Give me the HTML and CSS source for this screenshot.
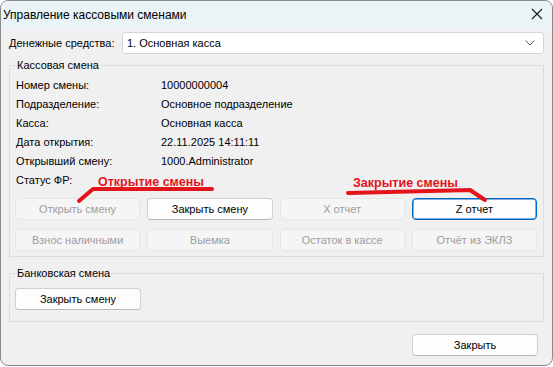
FILE: index.html
```html
<!DOCTYPE html>
<html lang="ru">
<head>
<meta charset="utf-8">
<title>Управление кассовыми сменами</title>
<link rel="stylesheet" href="styles.css">
</head>
<body>
<div class="window">
  <div class="titlebar">
    <span class="title">Управление кассовыми сменами</span>
    <svg class="close" width="12" height="12" viewBox="0 0 12 12"><path d="M1 1 L11 11 M11 1 L1 11" stroke="#1a1a1a" stroke-width="1.1" fill="none"/></svg>
  </div>
  <div class="content">
    <div class="field">
      <span class="field-label">Денежные средства:</span>
      <div class="combo">
        <span>1. Основная касса</span>
        <svg width="10" height="6" viewBox="0 0 10 6"><path d="M0.5 0.5 L5 5 L9.5 0.5" stroke="#606060" stroke-width="1" fill="none"/></svg>
      </div>
    </div>

    <fieldset class="group group-shift">
      <legend>Кассовая смена</legend>
      <div class="info">
        <span>Номер смены:</span><span>10000000004</span>
        <span>Подразделение:</span><span>Основное подразделение</span>
        <span>Касса:</span><span>Основная касса</span>
        <span>Дата открытия:</span><span>22.11.2025 14:11:11</span>
        <span>Открывший смену:</span><span>1000.Administrator</span>
        <span>Статус ФР:</span><span></span>
      </div>
      <div class="buttons">
        <button class="btn disabled">Открыть смену</button>
        <button class="btn">Закрыть смену</button>
        <button class="btn disabled">X отчет</button>
        <button class="btn focus">Z отчет</button>
        <button class="btn disabled">Взнос наличными</button>
        <button class="btn disabled">Выемка</button>
        <button class="btn disabled">Остаток в кассе</button>
        <button class="btn disabled">Отчёт из ЭКЛЗ</button>
      </div>
    </fieldset>

    <fieldset class="group group-bank">
      <legend>Банковская смена</legend>
      <button class="btn">Закрыть смену</button>
    </fieldset>

    <div class="footer">
      <button class="btn">Закрыть</button>
    </div>
  </div>

  <div class="annotations">
    <svg class="marks" width="553" height="367" viewBox="0 0 553 367">
      <path d="M79 201 L93 189 L212 189" stroke="#e3141c" stroke-width="4" fill="none" stroke-linecap="round" stroke-linejoin="round"/>
      <path d="M348 193 L470 190 L485 200" stroke="#e3141c" stroke-width="4" fill="none" stroke-linecap="round" stroke-linejoin="round"/>
    </svg>
    <span class="note note-open">Открытие смены</span>
    <span class="note note-close">Закрытие смены</span>
  </div>
</div>
</body>
</html>
```

FILE: styles.css
```css
html, body {
  margin: 0;
  padding: 0;
  background: #ffffff;
}

body {
  font-family: "Liberation Sans", Arial, sans-serif;
  font-size: 11px;
  color: #000;
}

.window {
  position: relative;
  box-sizing: border-box;
  width: 553px;
  height: 366px;
  border: 1px solid #8a8a8a;
  border-radius: 8px;
  background: #f0f0f0;
  overflow: hidden;
  display: flex;
  flex-direction: column;
}

.titlebar {
  height: 28px;
  background: #eaf3f5;
  display: flex;
  align-items: center;
  justify-content: space-between;
  padding: 0 9px 0 2px;
  flex-shrink: 0;
}

.title {
  font-size: 12px;
  line-height: 16px;
}

.close {
  display: block;
  margin-top: -2px;
}

.content {
  padding: 3px 8px 0 8px;
  display: flex;
  flex-direction: column;
}

.field {
  display: flex;
  align-items: center;
  height: 22px;
}

.field-label {
  width: 113px;
  flex-shrink: 0;
  white-space: nowrap;
}

.combo {
  flex: 1;
  height: 22px;
  box-sizing: border-box;
  background: #fff;
  border: 1px solid #d5d5d5;
  border-radius: 3px;
  display: flex;
  align-items: center;
  justify-content: space-between;
  padding: 0 8px 0 4px;
}

.combo svg {
  display: block;
}

.group {
  margin: 0;
  border: 1px solid #dcdcdc;
  border-radius: 0;
  min-width: 0;
}

.group legend {
  padding: 0 1px;
  margin-left: 1px;
  line-height: 16px;
  height: 16px;
}

.group-shift {
  margin-top: 3px;
  padding: 2px 6px 5px 5px;
}

.group-bank {
  margin-top: 8px;
  padding: 7px 6px 11px 5px;
}

.info {
  display: grid;
  grid-template-columns: 145px 1fr;
  grid-auto-rows: 19px;
  align-items: center;
  padding-left: 1px;
}

.buttons {
  margin-top: 9px;
  display: grid;
  grid-template-columns: repeat(4, 1fr);
  column-gap: 7px;
  row-gap: 9px;
}

.btn {
  font-family: inherit;
  font-size: 11px;
  height: 22px;
  box-sizing: border-box;
  padding: 0;
  margin: 0;
  background: #fdfdfd;
  color: #000;
  border: 1px solid #d0d0d0;
  border-bottom-color: #b8b8b8;
  border-radius: 4px;
}

.group-bank .btn {
  width: 126px;
  display: block;
}

.btn.disabled {
  background: #f5f5f5;
  border-color: #e6e6e6;
  color: #9d9d9d;
}

.btn.focus {
  border: 1px solid #0067c0;
  box-shadow: inset 0 0 0 0.5px #0067c0;
  background: #fdfdfd;
}

.footer {
  margin-top: 12px;
  display: flex;
  justify-content: flex-end;
  padding-right: 6px;
}

.footer .btn {
  width: 126px;
}

.annotations {
  position: absolute;
  left: -1px;
  top: -1px;
  width: 553px;
  height: 367px;
  pointer-events: none;
}

.marks {
  position: absolute;
  left: 0;
  top: 0;
}

.note {
  position: absolute;
  font-family: "Liberation Sans", Arial, sans-serif;
  font-weight: bold;
  font-size: 12.5px;
  line-height: 16px;
  color: #e3141c;
  white-space: nowrap;
}

.note-open {
  left: 98px;
  top: 174px;
}

.note-close {
  left: 353px;
  top: 175px;
}
```
